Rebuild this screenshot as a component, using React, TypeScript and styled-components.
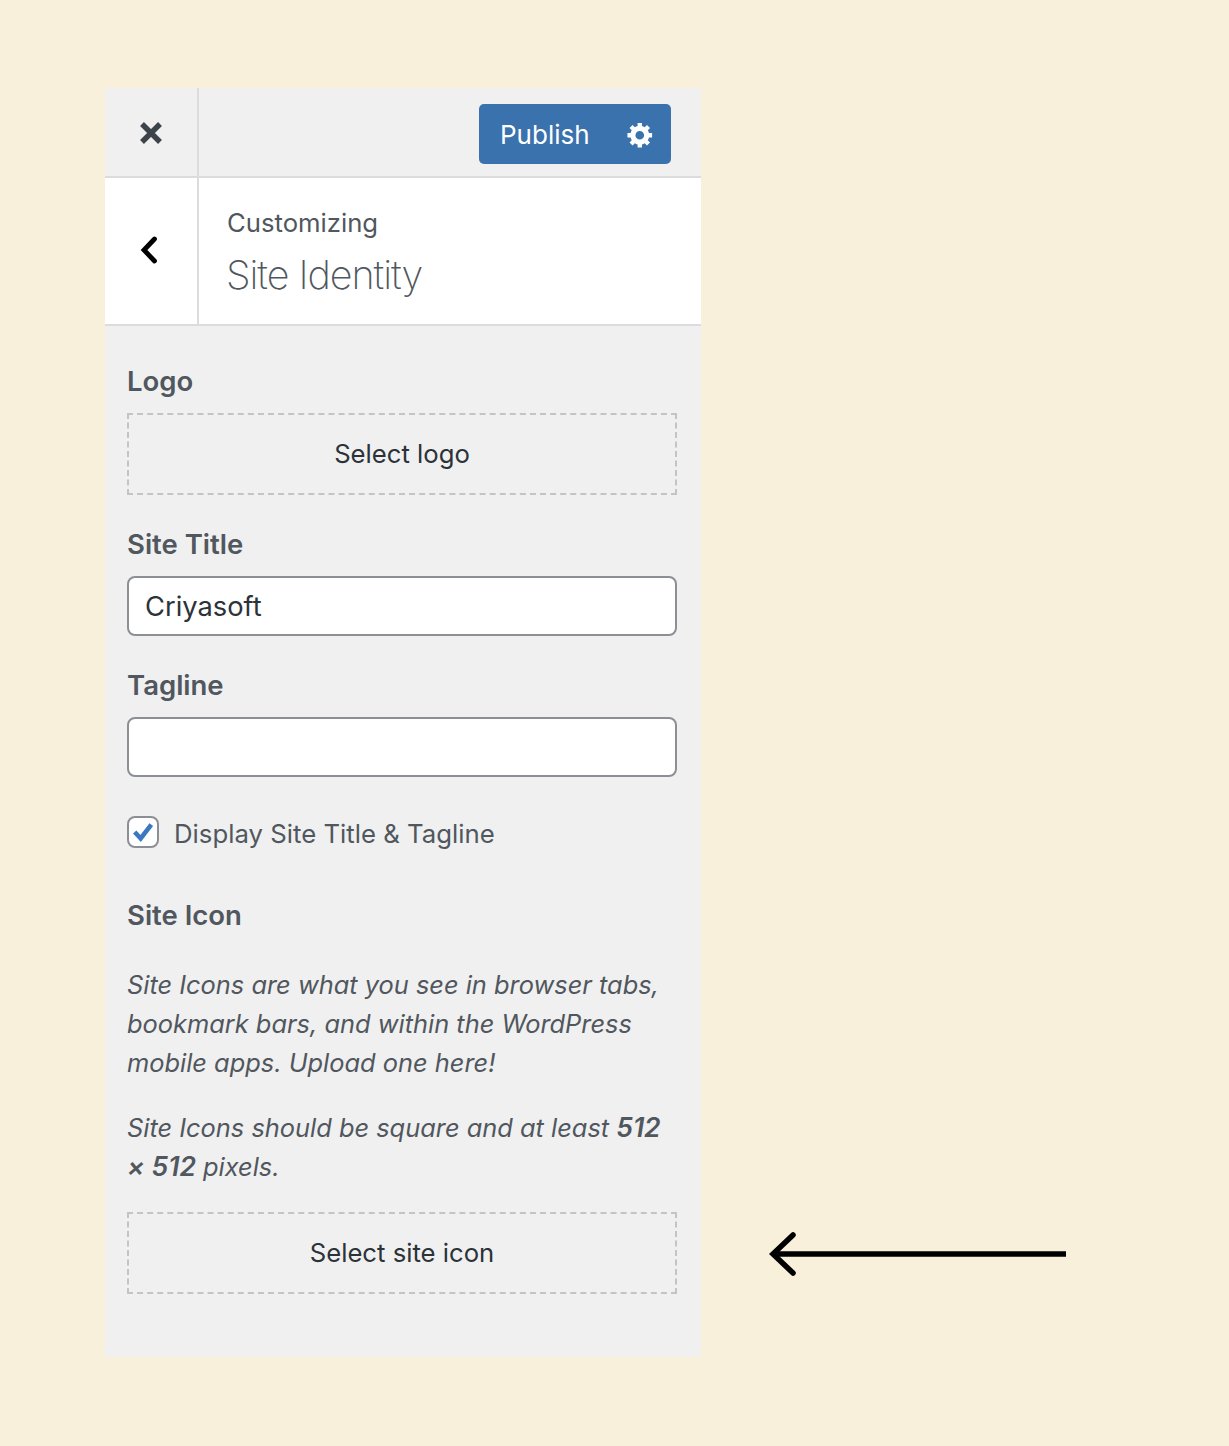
import React from "react";
import styled, { createGlobalStyle } from "styled-components";

const Global = createGlobalStyle`
  html, body { margin: 0; padding: 0; background: #f8f0da; }
  body { font-family: Inter, "Liberation Sans", sans-serif; -webkit-font-smoothing: antialiased; }
`;
const Page = styled.div`
  position: relative; width: 1229px; height: 1446px; padding: 88px 0 0 105px; box-sizing: border-box; background: #f8f0da;
`;
const Panel = styled.div`
  width: 596px; height: 1269px; background: #f0f0f0; display: flex; flex-direction: column;
`;
const TopBar = styled.div`
  height: 90px; flex: none; box-sizing: border-box; border-bottom: 2px solid #dcdcde; display: flex; align-items: stretch;
`;
const IconCell = styled.div`
  width: 94px; flex: none; box-sizing: border-box; border-right: 2px solid #dcdcde; display: flex; align-items: center; justify-content: center;
`;
const TopRight = styled.div`
  flex: 1; display: flex; justify-content: flex-end; align-items: flex-start; padding: 16px 30px 0 0;
`;
const PublishButton = styled.div`
  width: 192px; height: 60px; box-sizing: border-box; background: #3a72ae; border-radius: 5px; color: #fff;
  display: flex; align-items: center; justify-content: space-between; padding: 0 16px 0 21px; font-size: 26px; font-weight: 400;
`;
const Head = styled.div`
  height: 148px; flex: none; box-sizing: border-box; background: #fff; border-bottom: 2px solid #dcdcde; display: flex; align-items: stretch;
`;
const HeadText = styled.div`
  padding: 29px 0 0 28px; color: #50575e;
`;
const Eyebrow = styled.div`
  font-size: 25.7px; line-height: 32px;
`;
const HeadTitle = styled.div`
  font-size: 39.5px; line-height: 48px; font-weight: 200; margin: 12px 0 0 -1px; letter-spacing: -1.05px;
`;
const Body = styled.div`
  padding: 36px 24px 0 22px; display: flex; flex-direction: column;
`;
const Label = styled.div<{ $mt?: number }>`
  font-size: 27.5px; line-height: 38px; font-weight: 600; color: #50575e; margin-top: ${(p) => p.$mt ?? 0}px;
`;
const Dashed = styled.div<{ $mt: number }>`
  height: 82px; margin-top: ${(p) => p.$mt}px; padding-bottom: 2px; box-sizing: border-box; border: 2px dashed #c3c4c7; color: #2c3338;
  display: flex; align-items: center; justify-content: center; font-size: 25.7px;
`;
const Field = styled.div`
  height: 60px; margin-top: 13px; box-sizing: border-box; border: 2px solid #8c8f94; border-radius: 8px; background: #fff;
  padding: 0 16px; display: flex; align-items: center; font-size: 27.3px; color: #2c3338;
`;
const CheckRow = styled.div`
  display: flex; align-items: center; margin-top: 38px; gap: 15px; font-size: 25.75px; color: #50575e; height: 36px;
`;
const CheckBox = styled.div`
  width: 32px; height: 32px; margin-top: -3px; box-sizing: border-box; border: 2px solid #8c8f94; border-radius: 8px; background: #fff;
  display: flex; align-items: center; justify-content: center;
`;
const Description = styled.p<{ $mt: number }>`
  margin: ${(p) => p.$mt}px 0 0; font-size: 25.4px; line-height: 39px; font-style: italic; color: #50575e;
  b { font-weight: 600; font-size: 26.5px; }
`;
const Arrow = styled.svg`
  position: absolute; left: 768px; top: 1230px;
`;

export default function App() {
  return (
    <>
      <Global />
      <Page>
        <Panel>
          <TopBar>
            <IconCell>
              <svg width="26" height="26" viewBox="0 0 26 26" style={{ marginTop: 2 }}>
                <path d="M4 4 L22 22 M22 4 L4 22" stroke="#3c434a" strokeWidth="5.4" fill="none" />
              </svg>
            </IconCell>
            <TopRight>
              <PublishButton>
                Publish
                <svg width="29" height="29" viewBox="0 0 20 20" fill="#fff">
                  <path fillRule="evenodd" d="M18 12h-2.18c-.17.7-.44 1.35-.81 1.93l1.54 1.54-2.1 2.1-1.54-1.54c-.58.36-1.23.63-1.91.79V19H8v-2.18c-.68-.16-1.33-.43-1.91-.79l-1.54 1.54-2.12-2.12 1.54-1.54c-.36-.58-.63-1.23-.79-1.91H1V9.03h2.17c.16-.7.44-1.35.8-1.94L2.43 5.55l2.1-2.1 1.54 1.54c.58-.37 1.24-.64 1.93-.81V2h3v2.18c.68.16 1.33.43 1.91.79l1.54-1.54 2.12 2.12-1.54 1.54c.36.59.64 1.24.8 1.94H18V12zm-8.5 1.5c1.66 0 3-1.34 3-3s-1.34-3-3-3-3 1.34-3 3 1.34 3 3 3z" />
                </svg>
              </PublishButton>
            </TopRight>
          </TopBar>
          <Head>
            <IconCell>
              <svg width="20" height="30" viewBox="0 0 20 30" style={{ marginLeft: -4 }}>
                <path d="M15.5 3 L5 14 L15.5 25" stroke="#000" strokeWidth="4.8" fill="none" strokeLinecap="round" />
              </svg>
            </IconCell>
            <HeadText>
              <Eyebrow>Customizing</Eyebrow>
              <HeadTitle>Site Identity</HeadTitle>
            </HeadText>
          </Head>
          <Body>
            <Label>Logo</Label>
            <Dashed $mt={13}>Select logo</Dashed>
            <Label $mt={30}>Site Title</Label>
            <Field>Criyasoft</Field>
            <Label $mt={30}>Tagline</Label>
            <Field />
            <CheckRow>
              <CheckBox>
                <svg width="24" height="24" viewBox="0 0 26 24">
                  <path d="M4 12 L10.5 19 L22 4" stroke="#3a78c0" strokeWidth="5" fill="none" />
                </svg>
              </CheckBox>
              Display Site Title &amp; Tagline
            </CheckRow>
            <Label $mt={45}>Site Icon</Label>
            <Description $mt={31}>
              Site Icons are what you see in browser tabs, bookmark bars, and within the WordPress mobile apps. Upload one here!
            </Description>
            <Description $mt={26}>
              Site Icons should be square and at least <b>512 × 512</b> pixels.
            </Description>
            <Dashed $mt={26}>Select site icon</Dashed>
          </Body>
        </Panel>
        <Arrow width="300" height="48" viewBox="0 0 300 48">
          <path d="M298 24 H7" stroke="#000" strokeWidth="5.5" fill="none" />
          <path d="M25 5 L5 24 L25 43" stroke="#000" strokeWidth="5.5" fill="none" strokeLinecap="round" />
        </Arrow>
      </Page>
    </>
  );
}
